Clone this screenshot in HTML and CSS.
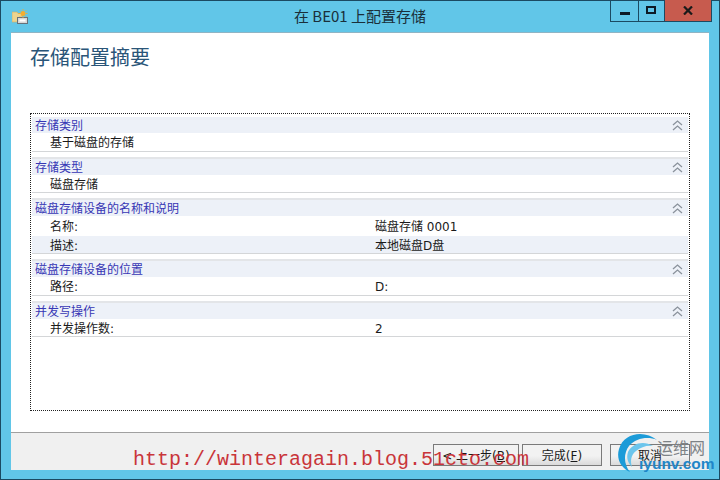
FILE: index.html
```html
<!DOCTYPE html>
<html lang="zh">
<head>
<meta charset="utf-8">
<title>在 BE01 上配置存储</title>
<link rel="stylesheet" href="styles.css">
</head>
<body>
<div class="window">
  <header class="titlebar">
    <svg class="app-icon" width="16" height="15" viewBox="0 0 16 15">
      <path d="M0 3h5l1 1.500h4V13H0z" fill="#ecd48f" stroke="#c9ab68" stroke-width=".6"/>
      <rect x="5.500" y="8.500" width="10" height="6" fill="#d8d8d8" stroke="#66717a"/>
      <rect x="7.500" y="10.500" width="6" height="2" fill="#fff"/>
      <circle cx="11" cy="4.500" r="2.500" fill="#f4ad2e"/>
      <path d="M11 0v1.500M11 7.500V9M6.500 4.500H8M14 4.500h1.500M7.800 1.300l1 1M14.200 1.300l-1 1M7.800 7.700l1-1M14.200 7.700l-1-1" stroke="#f4ad2e" stroke-width=".9"/>
    </svg>
    <div class="title">在 BE01 上配置存储</div>
    <div class="controls">
      <div class="ctl wide"><span class="min"></span></div>
      <div class="ctl"><span class="max"></span></div>
      <div class="ctl close"><svg width="10" height="9" viewBox="0 0 10 9"><path d="M1 .5l8 8M9 .5l-8 8" stroke="#1a1a1a" stroke-width="2.200"/></svg></div>
    </div>
  </header>
  <main class="client">
    <div class="content">
      <h1 class="heading">存储配置摘要</h1>
      <div class="panel">
        <section class="sec first">
          <div class="sec-head"><span>存储类别</span><svg class="chev" width="11" height="11" viewBox="0 0 11 11"><path d="M1 5l4.500-4 4.500 4M1 10l4.500-4 4.500 4" fill="none" stroke="#8a929c" stroke-width="1.300"/></svg></div>
          <div class="row"><span class="k">基于磁盘的存储</span></div>
        </section>
        <section class="sec">
          <div class="sec-head"><span>存储类型</span><svg class="chev" width="11" height="11" viewBox="0 0 11 11"><path d="M1 5l4.500-4 4.500 4M1 10l4.500-4 4.500 4" fill="none" stroke="#8a929c" stroke-width="1.300"/></svg></div>
          <div class="row short"><span class="k">磁盘存储</span></div>
        </section>
        <section class="sec">
          <div class="sec-head"><span>磁盘存储设备的名称和说明</span><svg class="chev" width="11" height="11" viewBox="0 0 11 11"><path d="M1 5l4.500-4 4.500 4M1 10l4.500-4 4.500 4" fill="none" stroke="#8a929c" stroke-width="1.300"/></svg></div>
          <div class="row tall"><span class="k">名称:</span><span class="v">磁盘存储 0001</span></div>
          <div class="row alt short"><span class="k">描述:</span><span class="v">本地磁盘D盘</span></div>
        </section>
        <section class="sec">
          <div class="sec-head"><span>磁盘存储设备的位置</span><svg class="chev" width="11" height="11" viewBox="0 0 11 11"><path d="M1 5l4.500-4 4.500 4M1 10l4.500-4 4.500 4" fill="none" stroke="#8a929c" stroke-width="1.300"/></svg></div>
          <div class="row"><span class="k">路径:</span><span class="v">D:</span></div>
        </section>
        <section class="sec">
          <div class="sec-head"><span>并发写操作</span><svg class="chev" width="11" height="11" viewBox="0 0 11 11"><path d="M1 5l4.500-4 4.500 4M1 10l4.500-4 4.500 4" fill="none" stroke="#8a929c" stroke-width="1.300"/></svg></div>
          <div class="row short"><span class="k">并发操作数:</span><span class="v">2</span></div>
        </section>
      </div>
    </div>
    <footer class="footer">
      <button class="btn back">&lt; 上一步(<u>B</u>)</button>
      <button class="btn finish">完成(<u>F</u>)</button>
      <button class="btn cancel">取消</button>
    </footer>
  </main>
  <div class="watermark">http://winteragain.blog.51cto.com</div>
  <div class="logo">
    <svg class="swirl" width="42" height="40" viewBox="0 0 42 40">
      <path d="M40 7C28-3 7-1 2 16c-3 10 2 19 11 23C7 32 6 21 12 13 19 5 31 3 40 7z" fill="#1c9bd8"/>
      <path d="M36 13C27 7 15 10 11 19c-2 6 0 11 4 15-2-6-1-12 4-16 5-4 11-6 17-5z" fill="#6cc5ec"/>
    </svg>
    <span class="logo-cn">运维网</span>
    <span class="logo-en">iyunv.com</span>
  </div>
</div>
</body>
</html>
```
FILE: styles.css
```css
* { box-sizing: border-box; }
html, body { margin: 0; padding: 0; }
body { width: 720px; height: 480px; overflow: hidden; font-family: "DejaVu Sans", "Noto Sans CJK SC", sans-serif; font-size: 12px; color: #1a1a1a; }
.window { position: relative; width: 720px; height: 480px; background: #61c6e8; border: 1px solid #1b4a62; display: flex; flex-direction: column; padding: 0 10px 9px 10px; }
.titlebar { height: 31px; flex: none; position: relative; }
.app-icon { display: block; position: absolute; left: 1px; top: 8px; }
.title { position: absolute; left: 0; right: 0; top: 4px; text-align: center; font-family: "Noto Sans CJK SC", sans-serif; font-size: 15px; line-height: 22px; color: #1a2f3a; }
.controls { position: absolute; right: -3px; top: -1px; display: flex; height: 22px; border: 1px solid #1b4a62; border-top: none; }
.ctl { width: 26px; height: 21px; display: flex; align-items: center; justify-content: center; border-right: 1px solid #1b4a62; }
.ctl.wide { width: 28px; }
.ctl.close { width: 46px; background: #c75b4e; border-right: none; }
.min { display: block; width: 10px; height: 3px; background: #0d1b26; margin-top: 6px; }
.max { display: block; width: 10px; height: 8px; border: 2px solid #0d1b26; margin-top: -1px; margin-right: 1px; }
.client { flex: 1; display: flex; flex-direction: column; background: #fff; border-top: 1px solid #8fb4c4; min-height: 0; }
.content { flex: 1; padding: 0 19px; display: flex; flex-direction: column; }
.heading { margin: 0; padding-top: 10px; height: 80px; font-family: "Noto Sans CJK SC", sans-serif; font-size: 20px; line-height: 28px; font-weight: 400; color: #2a5578; flex: none; }
.panel { height: 298px; flex: none; border: 1px dotted #222; padding: 3px 1px 0 1px; }
.sec { margin-top: 5px; border-top: 2px solid #e3e5e8; border-bottom: 1px solid #d4d6d8; }
.sec.first { margin-top: 0; border-top: none; }
.sec-head { height: 16px; background: #edf1f8; display: flex; align-items: center; justify-content: space-between; padding: 1px 5px 0 3px; color: #3737b5; line-height: 16px; }
.chev { flex: none; }
.row { height: 18px; display: flex; align-items: center; padding: 3px 0 0 18px; line-height: 17px; }
.row.short { height: 17px; }
.row.tall { height: 20px; }
.row.alt { background: #edf1f8; }
.k { width: 325px; flex: none; }
.footer { height: 38px; flex: none; background: #f0f0f0; border-top: 1px solid #a0a0a0; display: flex; justify-content: flex-end; padding: 11px 19px 0 0; margin-top: 20px; }
.btn { width: 80px; height: 22px; padding: 2px 0 0; margin: 0; font: inherit; font-size: 12px; line-height: 18px; color: #1a1a1a; background: linear-gradient(#f2f2f2 55%, #dadada); border: 1px solid #7a7a7a; }
.btn.back { width: 86px; margin-right: 3px; }
.btn.finish { margin-right: 8px; }
.watermark { position: absolute; left: 132px; top: 447px; font-family: "Liberation Mono", monospace; font-size: 20px; line-height: 24px; color: #c9353a; white-space: nowrap; }
.logo { position: absolute; left: 616px; top: 432px; width: 100px; height: 47px; }
.swirl { position: absolute; left: 0; top: 0; }
.logo-cn { position: absolute; left: 40px; top: 4px; font-family: "Noto Sans CJK SC", sans-serif; font-size: 16px; line-height: 20px; color: #7d8286; }
.logo-en { position: absolute; left: 22px; top: 22px; font-family: "Liberation Sans", sans-serif; font-weight: 700; font-size: 15.500px; line-height: 18px; color: #1f86c8; white-space: nowrap; }
```
